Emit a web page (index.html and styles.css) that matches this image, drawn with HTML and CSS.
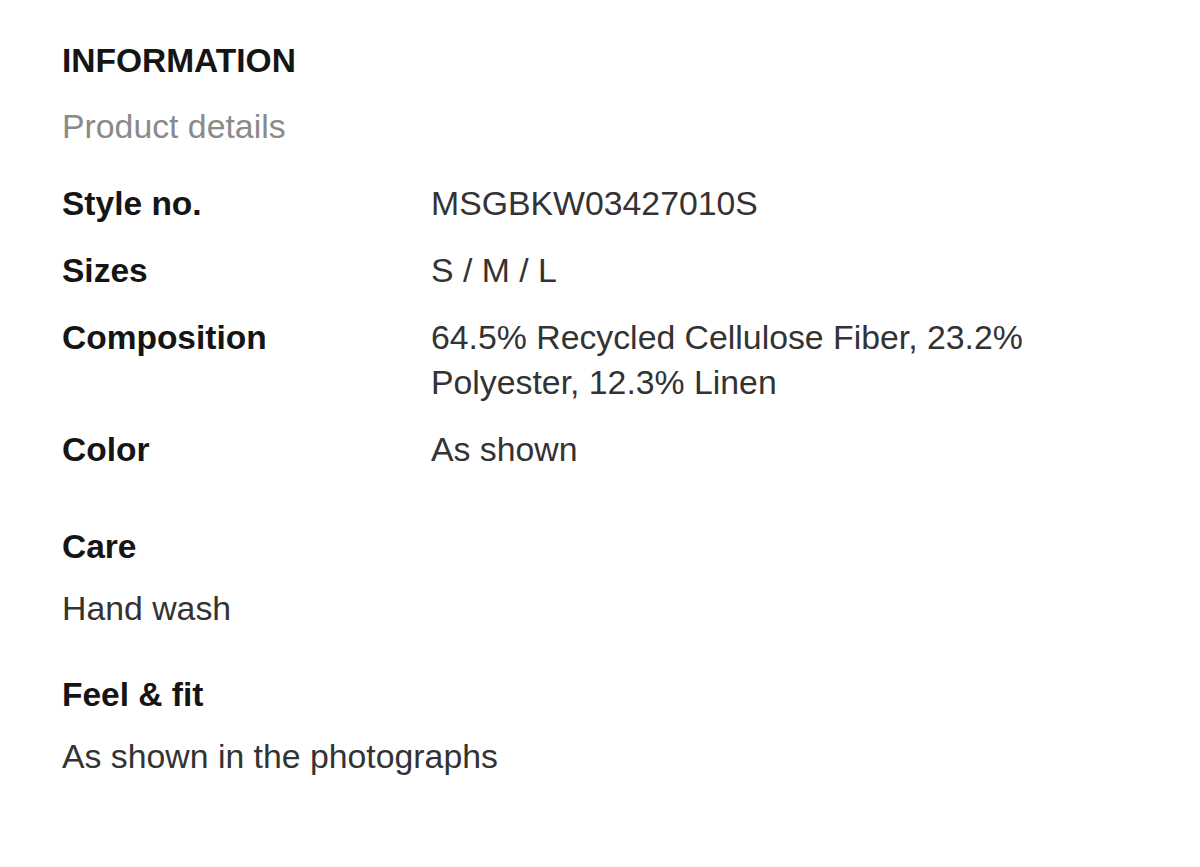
FILE: index.html
```html
<!DOCTYPE html>
<html lang="en">
<head>
    <meta charset="UTF-8">
    <meta name="viewport" content="width=device-width, initial-scale=1.0">
    <link rel="stylesheet" href="styles.css">
</head>
<body>
    <section class="info">
        <h2 class="info-title">INFORMATION</h2>
        <p class="info-subtitle">Product details</p>

        <!-- Details table -->
        <dl class="details">
            <dt>Style no.</dt>
            <dd>MSGBKW03427010S</dd>
            <dt>Sizes</dt>
            <dd>S / M / L</dd>
            <dt>Composition</dt>
            <dd>64.5% Recycled Cellulose Fiber, 23.2% Polyester, 12.3% Linen</dd>
            <dt>Color</dt>
            <dd>As shown</dd>
        </dl>

        <div class="block block-care">
            <h3 class="block-title">Care</h3>
            <p class="block-text">Hand wash</p>
        </div>

        <div class="block block-fit">
            <h3 class="block-title">Feel &amp; fit</h3>
            <p class="block-text">As shown in the photographs</p>
        </div>
    </section>
</body>
</html>
```

FILE: styles.css
```css
body {
    margin: 0;
    background: #ffffff;
    font-family: "Liberation Sans", Arial, sans-serif;
    font-size: 33.8px;
    line-height: 45px;
    color: #333333;
}

.info {
    padding: 38px 62px 0 62px;
}

.info-title {
    margin: 0;
    font-size: 33.5px;
    font-weight: 700;
    color: #151515;
}

.info-subtitle {
    margin: 21px 0 0 0;
    color: #8a8a8a;
}

.details {
    display: grid;
    grid-template-columns: 369px 1fr;
    row-gap: 22px;
    margin: 32px 0 0 0;
}

.details dt {
    font-size: 33.5px;
    font-weight: 700;
    color: #151515;
}

.details dd {
    margin: 0;
    color: #333333;
}

.block-care {
    margin-top: 52px;
}

.block-fit {
    margin-top: 41px;
}

.block-title {
    margin: 0;
    font-size: 33.5px;
    font-weight: 700;
    color: #151515;
}

.block-text {
    margin: 17px 0 0 0;
    color: #333333;
}
```
